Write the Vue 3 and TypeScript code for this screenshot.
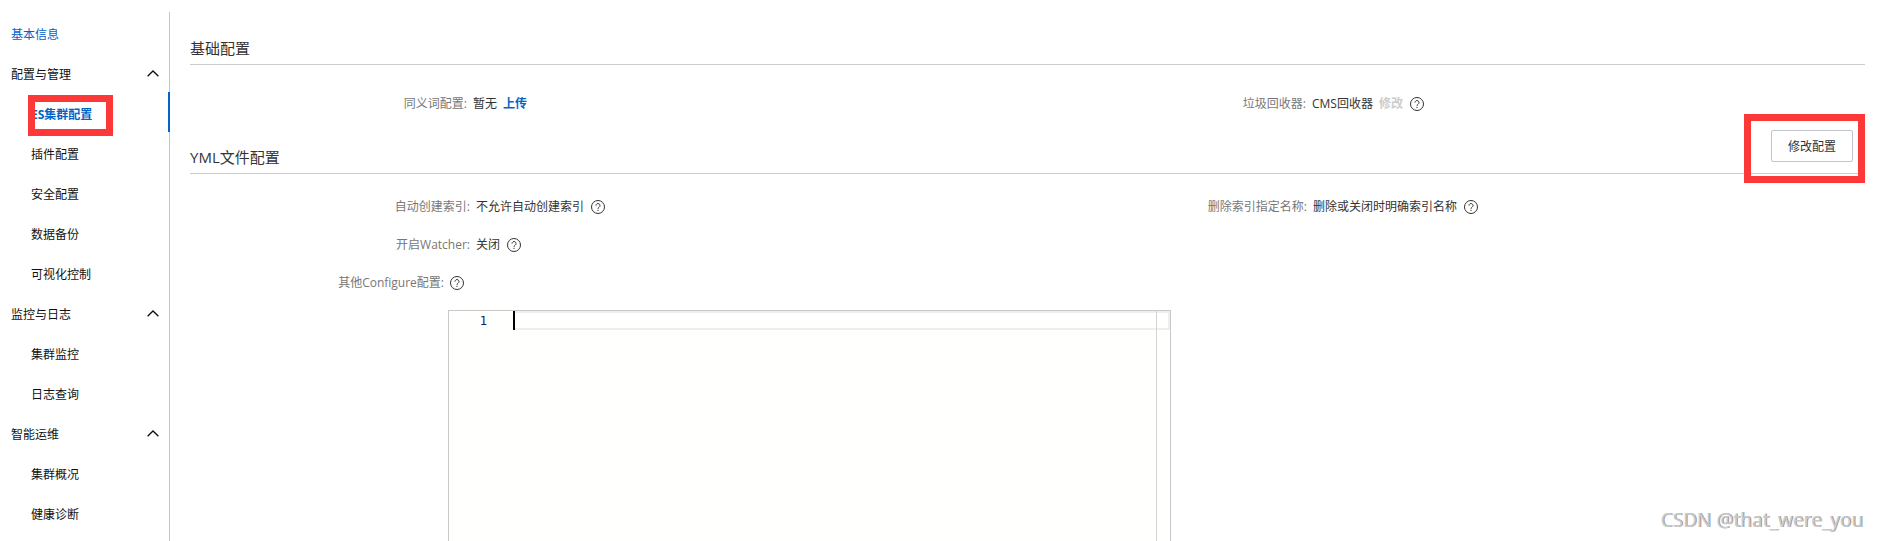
<script setup lang="ts">
import { ref } from 'vue'

interface NavGroup {
  title: string
  items: string[]
}

const groups: NavGroup[] = [
  { title: '配置与管理', items: ['ES集群配置', '插件配置', '安全配置', '数据备份', '可视化控制'] },
  { title: '监控与日志', items: ['集群监控', '日志查询'] },
  { title: '智能运维', items: ['集群概况', '健康诊断'] },
]

const active = ref('ES集群配置')
const collapsed = ref<string[]>([])
const yml = ref('')

function toggle(title: string) {
  collapsed.value = collapsed.value.includes(title)
    ? collapsed.value.filter((t) => t !== title)
    : [...collapsed.value, title]
}
</script>

<template>
  <div class="page">
    <svg class="defs" aria-hidden="true">
      <symbol id="help" viewBox="0 0 14 14">
        <circle cx="7" cy="7" r="6.5" fill="none" stroke="currentColor" stroke-width="1" />
        <path d="M5 5.6a2 2 0 1 1 3.1 1.6C7.4 7.7 7 8 7 8.8" fill="none" stroke="currentColor" stroke-width="1" />
        <rect x="6.5" y="9.8" width="1" height="1.2" fill="currentColor" />
      </symbol>
    </svg>

    <nav class="sidebar">
      <a class="row top current-page" href="#">基本信息</a>
      <template v-for="group in groups" :key="group.title">
        <button class="row top group" type="button" :aria-expanded="!collapsed.includes(group.title)" @click="toggle(group.title)">
          <span>{{ group.title }}</span>
          <svg class="chevron" viewBox="0 0 12 7" aria-hidden="true">
            <path d="M0.6 6.3 6 1l5.4 5.3" fill="none" stroke="currentColor" stroke-width="1.3" />
          </svg>
        </button>
        <template v-if="!collapsed.includes(group.title)">
          <a
            v-for="item in group.items"
            :key="item"
            class="row sub"
            :class="{ active: item === active }"
            href="#"
            @click.prevent="active = item"
          >{{ item }}<span v-if="item === active" class="mark mark-nav"></span></a>
        </template>
      </template>
    </nav>

    <main class="main">
      <h2 class="heading">基础配置</h2>
      <dl class="fields basic">
        <dt>同义词配置:</dt>
        <dd>暂无<a class="action" href="#">上传</a></dd>
        <dt>垃圾回收器:</dt>
        <dd>
          CMS回收器<button class="action" type="button" disabled>修改</button>
          <button class="help" type="button" aria-label="帮助"><svg><use href="#help" /></svg></button>
        </dd>
      </dl>

      <div class="heading yml-heading">
        <h2>YML文件配置</h2>
        <button class="edit" type="button">修改配置</button>
        <span class="mark mark-edit"></span>
      </div>
      <dl class="fields yml">
        <dt>自动创建索引:</dt>
        <dd>不允许自动创建索引<button class="help" type="button" aria-label="帮助"><svg><use href="#help" /></svg></button></dd>
        <dt>删除索引指定名称:</dt>
        <dd>删除或关闭时明确索引名称<button class="help" type="button" aria-label="帮助"><svg><use href="#help" /></svg></button></dd>
        <dt>开启Watcher:</dt>
        <dd>关闭<button class="help" type="button" aria-label="帮助"><svg><use href="#help" /></svg></button></dd>
      </dl>
      <div class="other">
        <label for="config">其他Configure配置:</label>
        <button class="help" type="button" aria-label="帮助"><svg><use href="#help" /></svg></button>
      </div>
      <div class="editor-wrap">
        <div class="editor">
          <span class="line-no">1</span>
          <span class="caret"></span>
          <textarea id="config" v-model="yml" class="line" rows="1" spellcheck="false"></textarea>
          <span class="ruler"></span>
        </div>
      </div>
    </main>

    <div class="watermark">CSDN @that_were_you</div>
  </div>
</template>

<style>
body {
  margin: 0;
  background: #fff;
}
</style>

<style scoped>
.page {
  position: relative;
  display: flex;
  box-sizing: border-box;
  min-height: 100vh;
  padding-top: 12px;
  overflow: hidden;
  font: 12px/18px "Open Sans", "Noto Sans CJK SC", sans-serif;
  color: #333;
}
.defs {
  position: absolute;
  width: 0;
  height: 0;
}
button {
  font: inherit;
  color: inherit;
  padding: 0;
  border: 0;
  background: none;
  cursor: pointer;
}
a {
  text-decoration: none;
}
.sidebar {
  flex: none;
  box-sizing: border-box;
  width: 170px;
  border-right: 1px solid #c0c4cc;
}
.row {
  position: relative;
  display: flex;
  align-items: center;
  justify-content: space-between;
  box-sizing: border-box;
  width: 100%;
  height: 40px;
  padding: 6px 10px 0 11px;
  color: #111;
}
.row.sub {
  padding-left: 31px;
}
.row.current-page {
  color: #0064c8;
}
.row.active {
  width: 170px;
  border-right: 2px solid #0064c8;
  color: #0064c8;
  font-weight: 700;
}
.chevron {
  width: 12px;
  height: 7px;
  margin-bottom: 4px;
}
.mark {
  position: absolute;
  box-sizing: border-box;
  border: 7px solid #fc3838;
  pointer-events: none;
}
.mark-nav {
  left: 28px;
  top: 3px;
  width: 85px;
  height: 41px;
}
.main {
  flex: 1;
  display: flex;
  flex-direction: column;
  min-width: 0;
  padding: 0 13px 0 20px;
}
.heading {
  display: flex;
  align-items: center;
  box-sizing: border-box;
  height: 53px;
  margin: 0;
  padding-top: 19px;
  border-bottom: 1px solid #ccc;
  font-size: 15px;
  line-height: 22px;
  font-weight: 400;
}
.heading h2 {
  margin: 0;
  font: inherit;
}
.yml-heading {
  position: relative;
  justify-content: space-between;
  height: 60px;
  padding: 26px 12px 0 0;
}
.edit {
  box-sizing: border-box;
  width: 82px;
  height: 32px;
  margin-top: -22px;
  padding-top: 2px;
  border: 1px solid #c0c4cc;
  border-radius: 2px;
  font-size: 12px;
}
.mark-edit {
  right: 0;
  top: 0;
  width: 121px;
  height: 69px;
}
.fields {
  display: grid;
  margin: 0;
}
.basic {
  grid-template-columns: 283px 1fr 286px 1fr;
  padding: 30px 0 1px;
}
.yml {
  grid-template-columns: 286px 1fr 285px 1fr;
  grid-auto-rows: 38px;
  padding-top: 24px;
}
dt,
.other label {
  padding-right: 6px;
  text-align: right;
  color: #777;
}
dd {
  display: flex;
  align-items: center;
  height: 18px;
  margin: 0;
}
.action {
  margin-left: 6px;
  font-weight: 700;
  color: #0064c8;
}
.action:disabled {
  color: #ccc;
}
.help {
  flex: none;
  width: 14px;
  height: 14px;
  margin-left: 7px;
}
.help svg {
  display: block;
  width: 14px;
  height: 14px;
}
.other {
  display: flex;
  align-items: center;
  height: 18px;
}
.other label {
  box-sizing: border-box;
  width: 260px;
}
.other .help {
  margin-left: 0;
}
.editor-wrap {
  flex: 1;
  display: flex;
  margin: 18px 0 0 258px;
}
.editor {
  position: relative;
  display: flex;
  align-items: flex-start;
  box-sizing: border-box;
  width: 51%;
  border: 1px solid #c8c8c8;
  border-bottom: 0;
  background: #fffffe;
}
.line-no {
  box-sizing: border-box;
  width: 64px;
  padding-right: 26px;
  font: 12px/20px "DejaVu Sans Mono", monospace;
  text-align: right;
  color: #0b216f;
}
.caret {
  width: 2px;
  height: 19px;
  background: #000;
}
.line {
  flex: 1;
  box-sizing: border-box;
  height: 19px;
  padding: 0;
  border: 2px solid #eee;
  border-left: 0;
  outline: 0;
  resize: none;
  overflow: hidden;
  background: transparent;
  font: 12px/15px "DejaVu Sans Mono", monospace;
}
.ruler {
  position: absolute;
  top: 0;
  right: 13px;
  bottom: 0;
  width: 1px;
  background: #d4d4d4;
}
.watermark {
  position: absolute;
  right: 15px;
  bottom: 7px;
  font: 19px/28px "Noto Sans", sans-serif;
  color: #ccc;
  text-shadow: 1px 0 0 #999;
  pointer-events: none;
}
</style>
